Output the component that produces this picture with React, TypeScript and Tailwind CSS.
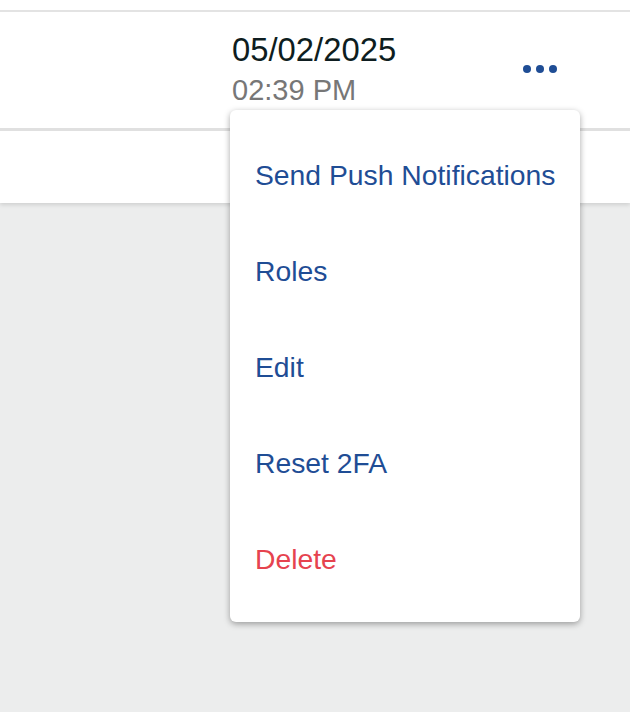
import React from "react";

const menuItems = [
  { label: "Send Push Notifications", danger: false },
  { label: "Roles", danger: false },
  { label: "Edit", danger: false },
  { label: "Reset 2FA", danger: false },
  { label: "Delete", danger: true },
];

const ActionsMenu = () => {
  return (
    <div className="absolute left-[230px] top-[110px] z-10 w-[350px] rounded-[6px] bg-white pt-[17px] pb-[15px] shadow-[0_2px_6px_rgba(0,0,0,0.35)]">
      {menuItems.map((item) => (
        <div
          key={item.label}
          className={
            item.danger
              ? "flex h-[96px] items-center whitespace-nowrap pl-[25px] text-[28.3px] text-[#e6434f]"
              : "flex h-[96px] items-center whitespace-nowrap pl-[25px] text-[28.3px] text-[#1f4d95]"
          }
        >
          {item.label}
        </div>
      ))}
    </div>
  );
};

export default function App() {
  return (
    <div
      className="relative h-[712px] w-[630px] overflow-hidden bg-[#eceded]"
      style={{ fontFamily: '"Liberation Sans", Arial, sans-serif' }}
    >
      <div className="relative z-[1] bg-white shadow-[0_2px_4px_rgba(0,0,0,0.12)]">
        <div className="h-[10px]" />
        <div className="h-[2px] bg-[#e3e3e3]" />
        <div className="flex h-[116px] items-start">
          <div className="flex-1" />
          <div className="flex w-[398px] items-start pt-[22px]">
            <div className="flex w-[291px] flex-col">
              <span className="text-[32.8px] leading-none text-[#0e1d20]">05/02/2025</span>
              <span className="mt-[9px] text-[29px] leading-none text-[#777777]">02:39 PM</span>
            </div>
            <button className="mt-[31px] flex items-center gap-[5px]">
              <span className="h-[8px] w-[8px] rounded-full bg-[#1f4d95]" />
              <span className="h-[8px] w-[8px] rounded-full bg-[#1f4d95]" />
              <span className="h-[8px] w-[8px] rounded-full bg-[#1f4d95]" />
            </button>
          </div>
        </div>
        <div className="h-[3px] bg-[#e0e0e0]" />
        <div className="h-[72px]" />
      </div>
      <ActionsMenu />
    </div>
  );
}
